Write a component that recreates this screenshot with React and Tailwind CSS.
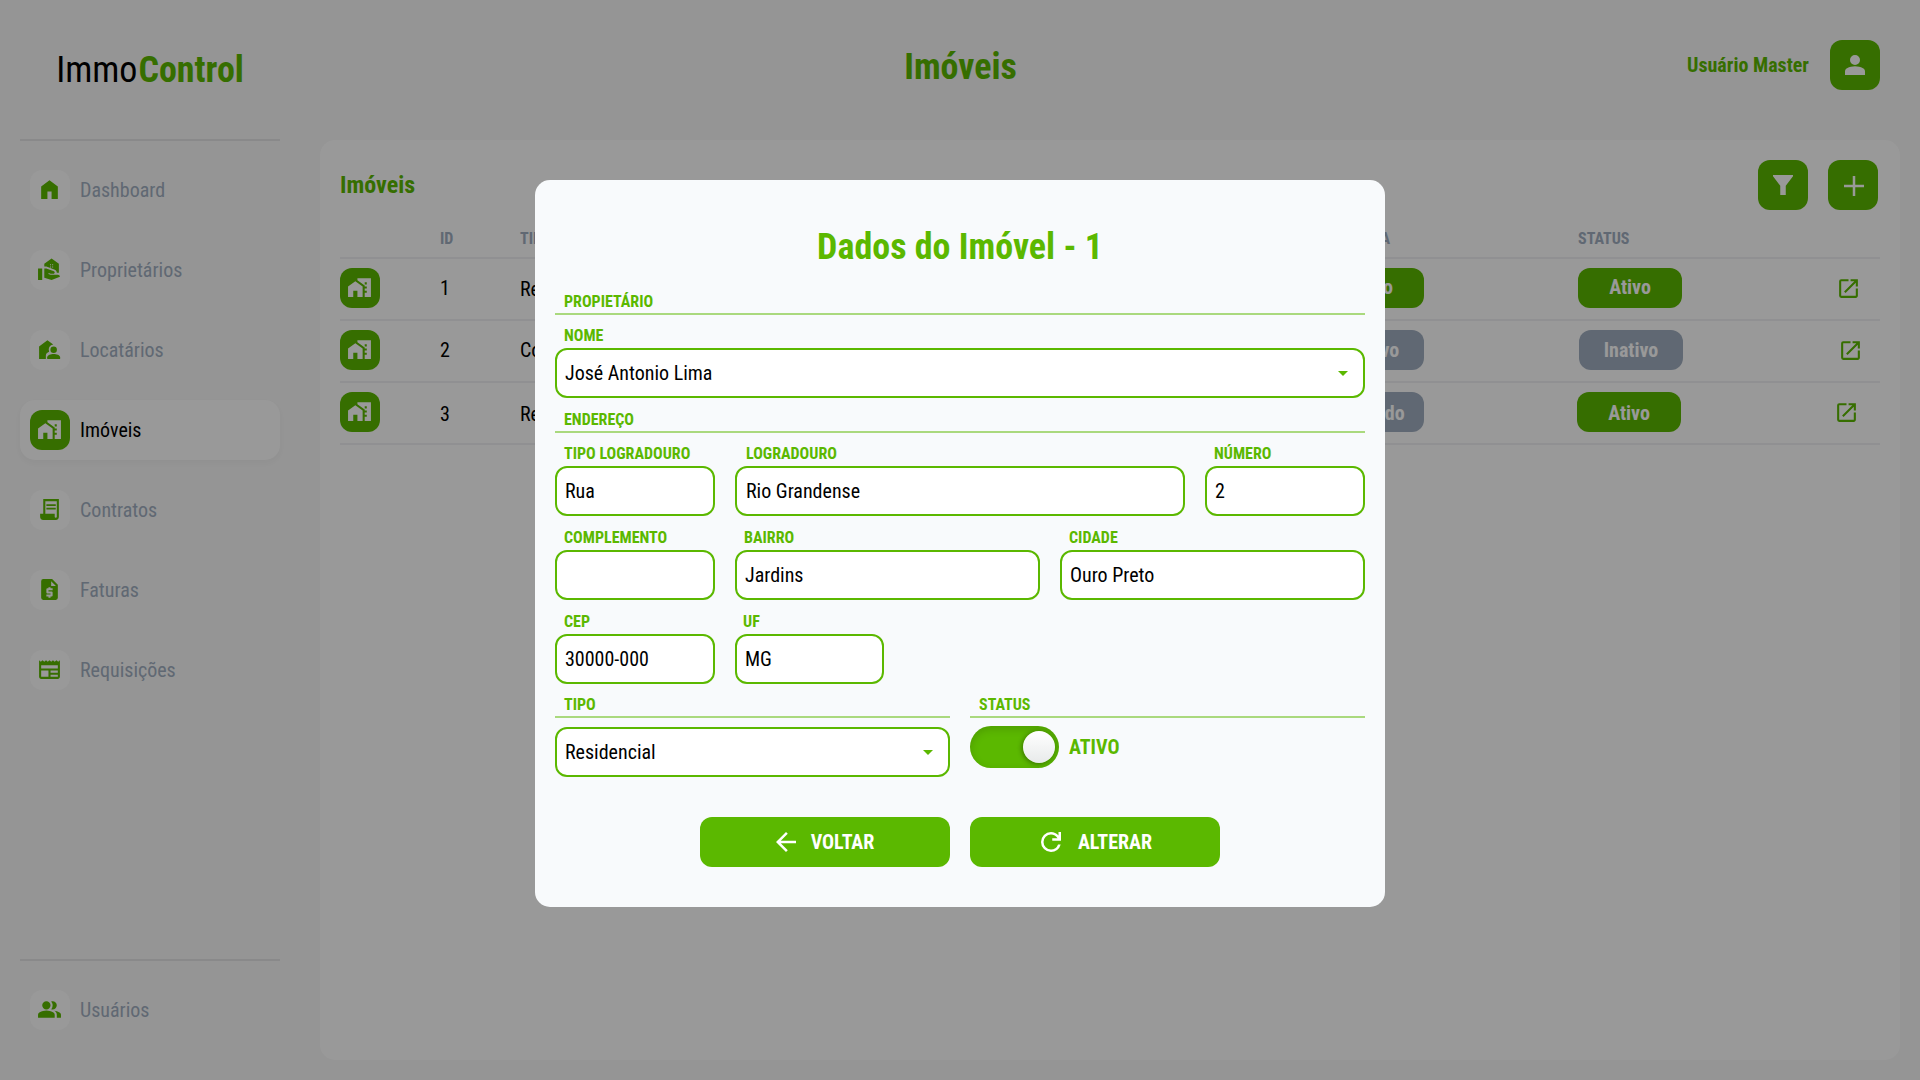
import {
  MdRealEstateAgent,
  MdHomeWork,
  MdNewspaper,
  MdOpenInNew,
  MdArrowBack,
  MdArrowDropDown,
} from "react-icons/md";

function Svg({ className, children }) {
  return (
    <svg viewBox="0 0 24 24" width="1em" height="1em" fill="currentColor" className={className}>
      {children}
    </svg>
  );
}

const HomeIcon = () => (
  <Svg>
    <path d="M4 21V9l8-6 8 6v12h-6v-7h-4v7H4Z" />
  </Svg>
);

const TenantIcon = () => (
  <Svg>
    <path d="M2 21V9l8-6 5.6 4.2a4.9 4.9 0 0 0-4 6.9c-1.9.9-3.1 1.7-3.1 3.9v3H2Z" />
    <circle cx="16" cy="12.2" r="3.1" />
    <path d="M9.8 21v-1.5c0-2.3 3.6-3.3 6.2-3.3s6.2 1 6.2 3.3V21H9.8Z" />
  </Svg>
);

const ReceiptIcon = () => (
  <Svg>
    <path
      fillRule="evenodd"
      d="M6 2h15v17a3 3 0 0 1-3 3H6a3 3 0 0 1-3-3v-3h3V2Zm2 2v12h9v3a1 1 0 0 0 2 0V4H8Z"
    />
    <path d="M9 7h9v1.6H9zM9 10.4h9V12H9z" />
  </Svg>
);

const InvoiceIcon = () => (
  <Svg>
    <path
      fillRule="evenodd"
      d="M6 2h8.5L20 7.5V20a2 2 0 0 1-2 2H6a2 2 0 0 1-2-2V4a2 2 0 0 1 2-2Zm7.6 2v4.6h4.6L13.6 4ZM11 9.8v1h-1a1 1 0 0 0-1 1v3a1 1 0 0 0 1 1h3v1H9v2h2v1h2v-1h1a1 1 0 0 0 1-1v-3a1 1 0 0 0-1-1h-3v-1h4v-2h-2v-1h-2Z"
    />
  </Svg>
);

const GroupIcon = () => (
  <Svg>
    <path d="M1 20v-2.8q0-.85.438-1.562T2.6 14.55q1.55-.775 3.15-1.162T9 13t3.25.388t3.15 1.162q.725.375 1.163 1.088T17 17.2V20zm18 0v-3q0-1.1-.612-2.113T16.65 13.15q1.275.15 2.4.513t2.1.887q.9.5 1.375 1.112T23 17v3zM9 12q-1.65 0-2.825-1.175T5 8t1.175-2.825T9 4t2.825 1.175T13 8t-1.175 2.825T9 12m10-4q0 1.65-1.175 2.825T15 12q-.275 0-.7-.062t-.7-.138q.675-.8 1.038-1.775T15 8t-.362-2.025T13.6 4.2q.35-.125.7-.163T15 4q1.65 0 2.825 1.175T19 8" />
  </Svg>
);

const PersonIcon = () => (
  <Svg>
    <path d="M12 12q-1.65 0-2.825-1.175T8 8t1.175-2.825T12 4t2.825 1.175T16 8t-1.175 2.825T12 12m-8 8v-2.8q0-.85.438-1.562T5.6 14.55q1.55-.775 3.15-1.162T12 13t3.25.388t3.15 1.162q.725.375 1.163 1.088T20 17.2V20z" />
  </Svg>
);

const FilterIcon = () => (
  <Svg>
    <path d="M4 4h16v1l-5.8 7.6V20H9.8v-7.4L4 5V4Z" />
  </Svg>
);

const RefreshIcon = () => (
  <Svg className="size-[30px]">
    <path d="M12 20q-3.35 0-5.675-2.325T4 12t2.325-5.675T12 4q1.725 0 3.3.712T18 6.75V4h2v7h-7V9h4.2q-.8-1.4-2.187-2.2T12 6Q9.5 6 7.75 7.75T6 12t1.75 4.25T12 18q1.925 0 3.475-1.1T17.65 14h2.1q-.7 2.65-2.85 4.325T12 20" />
  </Svg>
);

const menu = [
  { label: "Dashboard", icon: HomeIcon },
  { label: "Proprietários", icon: MdRealEstateAgent },
  { label: "Locatários", icon: TenantIcon },
  { label: "Imóveis", icon: MdHomeWork, active: true },
  { label: "Contratos", icon: ReceiptIcon },
  { label: "Faturas", icon: InvoiceIcon },
  { label: "Requisições", icon: MdNewspaper },
];

function MenuItem({ label, icon: Icon, active }) {
  return (
    <a
      className={`flex h-[60px] w-[260px] items-center gap-2.5 rounded-[15px] px-2.5 text-xl ${
        active ? "bg-white text-black shadow-[0_3px_6px_rgba(0,40,30,0.03)]" : "text-[#a0aec0]"
      }`}
    >
      <span
        className={`flex size-10 items-center justify-center rounded-xl pr-px pb-px text-[25px] ${
          active ? "bg-[#5bb800] text-white" : "bg-white text-[#5bb800]"
        }`}
      >
        <Icon />
      </span>
      {label}
    </a>
  );
}

const rows = [
  { id: 1, kind: "Residencial", sale: "Ativo", saleOn: true, status: "Ativo", on: true, idCell: "", kindCell: "pt-0.5", text: "pb-0.5", shift: "ml-0", open: "ml-0" },
  { id: 2, kind: "Comercial", sale: "Inativo", saleOn: false, status: "Inativo", on: false, idCell: "", kindCell: "", text: "", shift: "ml-px", open: "ml-0.5" },
  { id: 3, kind: "Residencial", sale: "Vendido", saleOn: false, status: "Ativo", on: true, idCell: "pt-1", kindCell: "pt-1", text: "pt-0.5", shift: "-ml-px", open: "-ml-0.5" },
];

const tableGrid = "grid grid-cols-[100px_80px_800px_258px_258px_44px]";

function Badge({ on, pad, children }) {
  return (
    <span
      className={`flex h-10 w-[104px] items-center justify-center rounded-xl text-xl font-bold text-white ${pad} ${
        on ? "bg-[#5bb800]" : "bg-[#a0aec0]"
      }`}
    >
      {children}
    </span>
  );
}

function SquareButton({ children }) {
  return (
    <button className="flex size-[50px] items-center justify-center rounded-xl bg-[#5bb800] text-[30px] text-white">
      {children}
    </button>
  );
}

function Label({ className = "pl-[9px]", children }) {
  return <div className={`h-[19px] text-base leading-[19px] font-bold text-[#5bb800] ${className}`}>{children}</div>;
}

function Section({ children }) {
  return (
    <div className="border-b-2 border-[#5bb800]/50 pb-0.5">
      <Label>{children}</Label>
    </div>
  );
}

function Box({ value, select, pad = "pl-2" }) {
  return (
    <div className={`flex h-[50px] items-center justify-between rounded-xl border-2 border-[#5bb800] bg-white pr-1.5 text-xl text-black ${pad}`}>
      <span>{value}</span>
      {select && <MdArrowDropDown className="mr-0.5 size-6 text-[#5bb800]" />}
    </div>
  );
}

function Field({ label, value, width, select, labelPad, pad }) {
  return (
    <div className={`flex flex-col gap-[3px] ${width}`}>
      <Label className={labelPad}>{label}</Label>
      <Box value={value} select={select} pad={pad} />
    </div>
  );
}

function Modal() {
  return (
    <div className="fixed inset-0 flex items-start justify-center bg-black/40 pt-[180px]">
      <div className="flex h-[727px] w-[850px] flex-col rounded-[15px] bg-[#f8fafc] px-5 pt-[46px]">
        <h2 className="text-center text-[36px] leading-[42px] font-bold text-[#5bb800]">Dados do Imóvel - 1</h2>
        <div className="mt-6">
          <Section>PROPIETÁRIO</Section>
        </div>
        <div className="mt-[11px]">
          <Field label="NOME" value="José Antonio Lima" width="w-full" select />
        </div>
        <div className="mt-3">
          <Section>ENDEREÇO</Section>
        </div>
        <div className="mt-[11px] flex gap-5">
          <Field label="TIPO LOGRADOURO" value="Rua" width="w-40" />
          <Field label="LOGRADOURO" value="Rio Grandense" width="w-[450px]" labelPad="pl-[11px]" pad="pl-[9px]" />
          <Field label="NÚMERO" value="2" width="w-40" />
        </div>
        <div className="mt-3 flex gap-5">
          <Field label="COMPLEMENTO" value="" width="w-40" />
          <Field label="BAIRRO" value="Jardins" width="w-[305px]" />
          <Field label="CIDADE" value="Ouro Preto" width="w-[305px]" />
        </div>
        <div className="mt-3 flex gap-5">
          <Field label="CEP" value="30000-000" width="w-40" />
          <Field label="UF" value="MG" width="w-[148.5px]" labelPad="pl-2" />
        </div>
        <div className="mt-[11px] grid grid-cols-2 gap-5">
          <div className="flex flex-col gap-[9px]">
            <Section>TIPO</Section>
            <Box value="Residencial" select />
          </div>
          <div className="flex flex-col gap-2">
            <Section>STATUS</Section>
            <div className="flex items-center gap-2.5">
              <span className="flex h-[42px] w-[89px] items-center justify-end rounded-full bg-[#5bb800] px-1 shadow-[inset_0_3px_8px_rgba(0,0,0,0.15)]">
                <span className="size-8 rounded-full bg-gradient-to-b from-white to-[#e8eaea] shadow-[-1px_1px_5px_rgba(0,0,0,0.4)]" />
              </span>
              <span className="text-xl font-bold text-[#5bb800]">ATIVO</span>
            </div>
          </div>
        </div>
        <div className="mt-10 flex justify-center gap-5 text-xl font-bold text-white">
          <button className="flex h-[50px] w-[250px] items-center justify-center gap-2.5 rounded-xl bg-[#5bb800] pr-[5px]">
            <MdArrowBack className="size-[30px]" />
            VOLTAR
          </button>
          <button className="flex h-[50px] w-[250px] items-center justify-center gap-3 rounded-xl bg-[#5bb800] pr-0.5">
            <RefreshIcon />
            ALTERAR
          </button>
        </div>
      </div>
    </div>
  );
}

export default function App() {
  return (
    <div className="flex h-screen flex-col bg-[#f8f8f8] font-['Roboto_Condensed','Roboto',sans-serif] font-stretch-condensed">
      <header className="grid h-[139px] shrink-0 grid-cols-[300px_1fr_300px] items-start">
        <div className="pt-[49px] text-center text-[36px] leading-[42px] font-normal text-black">
          Immo<span className="ml-px font-bold text-[#5bb800]">Control</span>
        </div>
        <h1 className="pt-[46px] pl-px text-center text-[36px] leading-[42px] font-bold text-[#5bb800]">Imóveis</h1>
        <div className="flex items-center justify-end gap-[21px] pt-10 pr-10">
          <span className="text-xl font-bold text-[#5bb800]">Usuário Master</span>
          <SquareButton>
            <PersonIcon />
          </SquareButton>
        </div>
      </header>

      <div className="flex min-h-0 flex-1">
        <aside className="flex w-[320px] flex-col pb-10 pl-5">
          <div className="h-0.5 w-[260px] bg-[#e4e5e6]" />
          <nav className="mt-[19px] flex flex-1 flex-col gap-5">
            {menu.map((m) => (
              <MenuItem key={m.label} {...m} />
            ))}
          </nav>
          <div className="h-0.5 w-[260px] bg-[#e4e5e6]" />
          <div className="mt-[19px]">
            <MenuItem label="Usuários" icon={GroupIcon} />
          </div>
        </aside>

        <main className="mt-px mr-5 mb-5 flex-1 rounded-[15px] bg-white p-5">
          <div className="flex items-center justify-between pr-0.5">
            <h2 className="text-2xl font-bold text-[#5bb800]">Imóveis</h2>
            <div className="flex gap-5">
              <SquareButton>
                <FilterIcon />
              </SquareButton>
              <SquareButton>
                <svg viewBox="0 0 20 20" className="mt-0.5 ml-0.5 size-5" stroke="currentColor" strokeWidth="2.5">
                  <path d="M10 0v20M0 10h20" />
                </svg>
              </SquareButton>
            </div>
          </div>

          <div className={`${tableGrid} mt-[19px] h-[30px] border-b-2 border-[#f0f1f3] text-base leading-[19px] font-bold text-[#a0aec0]`}>
            <span />
            <span>ID</span>
            <span>TIPO</span>
            <span className="w-[70px] text-right whitespace-nowrap">VENDA</span>
            <span>STATUS</span>
            <span />
          </div>
          {rows.map((r) => (
            <div
              key={r.id}
              className={`${tableGrid} h-[62px] items-center border-b-2 border-[#f0f1f3] pb-[3px] text-xl text-black`}
            >
              <span className="flex size-10 items-center justify-center rounded-xl bg-[#5bb800] pr-px pb-px text-[25px] text-white">
                <MdHomeWork />
              </span>
              <span className={r.idCell}>{r.id}</span>
              <span className={r.kindCell}>{r.kind}</span>
              <Badge on={r.saleOn} pad={r.text}>{r.sale}</Badge>
              <span className={r.shift}>
                <Badge on={r.on} pad={r.text}>{r.status}</Badge>
              </span>
              <MdOpenInNew className={`mt-px size-[25px] text-[#5bb800] ${r.open}`} />
            </div>
          ))}
        </main>
      </div>

      <Modal />
    </div>
  );
}
